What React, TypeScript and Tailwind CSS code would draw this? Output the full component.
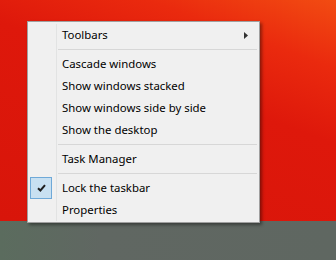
import React from "react";

type Row = { label?: string; sep?: boolean; checked?: boolean; sub?: boolean };

const rows: Row[] = [
  { label: "Toolbars", sub: true },
  { sep: true },
  { label: "Cascade windows" },
  { label: "Show windows stacked" },
  { label: "Show windows side by side" },
  { label: "Show the desktop" },
  { sep: true },
  { label: "Task Manager" },
  { sep: true },
  { label: "Lock the taskbar", checked: true },
  { label: "Properties" },
];

const CheckMark = () => (
  <svg width="9" height="8" viewBox="0 0 9 8">
    <path d="M1 4.2 L3.4 6.5 L8 1.2" fill="none" stroke="#1f1f1f" strokeWidth="2" />
  </svg>
);

const MenuRow: React.FC<{ row: Row }> = ({ row }) => {
  if (row.sep) {
    return (
      <div className="flex h-[7px]">
        <div className="w-[27px] border-r border-[#e2e3e3]" />
        <div className="flex-1 flex items-center pl-[1px]">
          <div className="w-full h-px bg-[#d7d7d7]" />
        </div>
      </div>
    );
  }
  return (
    <div className="flex h-[22px]">
      <div className="w-[27px] border-r border-[#e2e3e3] flex items-center">
        {row.checked && (
          <div className="w-[22px] h-[22px] bg-[#c8e0f1] border border-[#6fa9d8] flex items-center justify-center">
            <CheckMark />
          </div>
        )}
      </div>
      <div className="flex-1 flex items-center justify-between pl-[5px] pr-[9px] text-[11.4px] leading-[22px] text-black">
        <span>{row.label}</span>
        {row.sub && (
          <svg width="4" height="7" viewBox="0 0 4 7">
            <path d="M0 0 L4 3.5 L0 7 Z" fill="#333" />
          </svg>
        )}
      </div>
    </div>
  );
};

const App: React.FC = () => {
  return (
    <div
      className="relative w-[336px] h-[260px] overflow-hidden flex flex-col"
      style={{ fontFamily: '"Noto Sans", "Open Sans", sans-serif' }}
    >
      <div className="h-[221px] bg-[linear-gradient(200deg,#f24c12_0%,#ea2a0e_20%,#de180b_42%,#d8150a_100%)]" />
      <div className="flex-1 bg-[linear-gradient(90deg,#5b6c5e_0%,#606762_30%,#5f6761_100%)]" />

      {/* context menu */}
      <div className="absolute left-[27px] top-[21px] w-[233px] bg-[#f0f0f0] border border-[#a0a0a0] pt-[2px] pb-[1px] px-[2px] shadow-[2px_2px_3px_rgba(0,0,0,0.4)]">
        {rows.map((row, i) => (
          <MenuRow key={i} row={row} />
        ))}
      </div>
    </div>
  );
};

export default App;
